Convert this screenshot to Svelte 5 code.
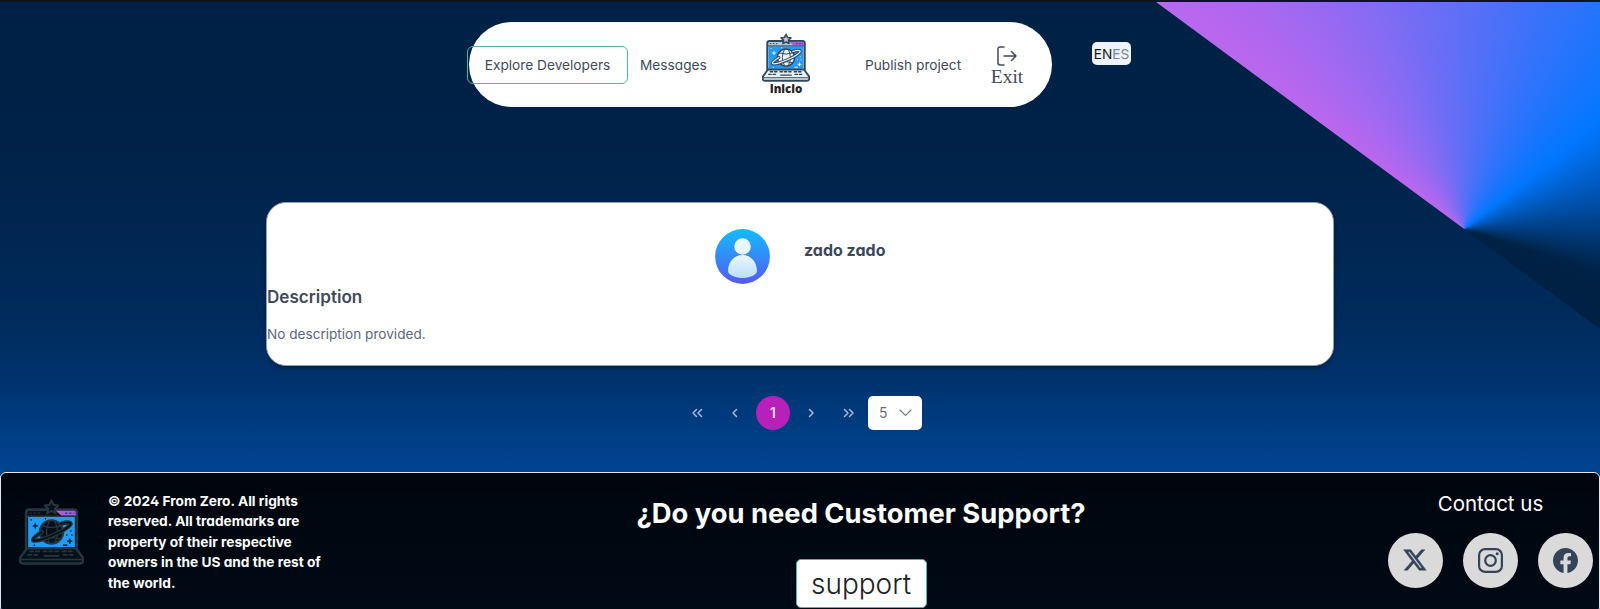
<script>
  const contacts = ['x', 'instagram', 'facebook'];
  const legal = [
    '© 2024 From Zero. All rights',
    'reserved. All trademarks are',
    'property of their respective',
    'owners in the US and the rest of',
    'the world.'
  ];
</script>

{#snippet logo(cls, line, key, bar)}
  <svg class={cls} viewBox="0 0 64 64" fill="none" stroke={line} stroke-linejoin="round" stroke-linecap="round">
    <path d="M7 49V13q0-3 3-3h44q3 0 3 3v36z" fill={bar} stroke-width="2.6" />
    <path d="M9 17h46v30H9z" fill="#219bf5" stroke="none" />
    <path d="M36 11h18q2 0 2 2v3H42z" fill="#a95de0" stroke="none" />
    <path d="M7.500 16.500h49M11 13.500h1M15 13.500h1M19 13.500h1M46 13.500h1M50 13.500h1M54 13.500h0" stroke-width="1.300" />
    <path d="M32 1l2 4.200 4.600.6-3.400 3.200.9 4.500-4.100-2.200-4.100 2.200.9-4.500-3.400-3.200 4.600-.6z" fill={bar} stroke-width="2" />
    <circle cx="32" cy="32" r="11.500" fill={key} stroke-width="2" />
    <path d="M23 26q9 3 18 0M23 39q9-3 18 0M30 21q-6 11 0 22M35 21q6 11 0 22" stroke-width="1.300" />
    <path d="M22.500 32C10 40 12 42 22 39.500 32 36.500 46 30 50 25.500c3-3.500-2-3.500-9-1.500" stroke-width="4.200" />
    <path d="M22.500 32C10 40 12 42 22 39.500 32 36.500 46 30 50 25.500c3-3.500-2-3.500-9-1.500" stroke={key} stroke-width="1.700" />
    <path d="M16 24v4M14 26h4M50 39v4M48 41h4M12 20h.2M26 19h.2M51 31h.2M47 35h.2M15 45h.2M44 45h3M52 35h.2" stroke={key} stroke-width="1.400" />
    <path d="M8 48h48l7 9.500v2.500q0 3-3 3H4q-3 0-3-3v-2.500z" fill={key} stroke-width="2.400" />
    <path d="M1.500 59h61" stroke-width="1.500" />
    <path d="M11 51h10M24 51h15M43 51h10M9 54.500h11M44 54.500h11" stroke-width="1.800" stroke-dasharray="3.200 2.600" />
    <path d="M25 55.500h14" stroke-width="1.800" />
  </svg>
{/snippet}

<div class="page">
  <div class="beam"></div>
  <header>
    <nav>
      <button class="explore">Explore Developers</button>
      <span class="messages">Messages</span>
      <span class="home">
        {@render logo('navlogo', '#30485a', '#e8f0f5', '#b9c9d3')}
        <b>Inicio</b>
      </span>
      <span class="publish">Publish project</span>
      <span class="exit">
        <svg width="20" height="20" viewBox="0 0 20 20" fill="none" stroke="#3f4a5a" stroke-width="1.500" stroke-linecap="round" stroke-linejoin="round">
          <path d="M7 1H3.200Q1 1 1 3.200v13.600Q1 19 3.200 19H7M7 10h12M14.500 5.500L19 10l-4.500 4.500" />
        </svg>
        <span>Exit</span>
      </span>
    </nav>
    <div class="lang"><span>EN</span><span class="off">ES</span></div>
  </header>

  <main>
    <article>
      <div class="person">
        <svg width="55" height="55" viewBox="0 0 55 55">
          <defs>
            <linearGradient id="disc" x1="0" y1="0" x2="0" y2="1"><stop stop-color="#12bdfb" /><stop offset="1" stop-color="#5558f5" /></linearGradient>
            <linearGradient id="body" x1="0" y1="0" x2="0" y2="1"><stop stop-color="#edf7ff" /><stop offset="1" stop-color="#b9dfff" /></linearGradient>
          </defs>
          <circle cx="27.500" cy="27.500" r="27.400" fill="url(#disc)" />
          <circle cx="27.500" cy="17.500" r="8.300" fill="#e8f6ff" />
          <path d="M27.500 26C19 26 13 33 13 42q0 2 1.800 3.200Q20 49 27.500 49t12.700-3.800Q42 44 42 42c0-9-6-16-14.500-16z" fill="url(#body)" />
        </svg>
        <h2>zado zado</h2>
      </div>
      <h3>Description</h3>
      <p>No description provided.</p>
    </article>

    <div class="pager">
      <svg class="step" viewBox="0 0 34 34"><path d="M16.500 13.500L13 17l3.500 3.500M21.500 13.500L18 17l3.500 3.500" /></svg>
      <svg class="step" viewBox="0 0 34 34"><path d="M18.500 13.500L15 17l3.500 3.500" /></svg>
      <span class="current">1</span>
      <svg class="step" viewBox="0 0 34 34"><path d="M15.500 13.500L19 17l-3.500 3.500" /></svg>
      <svg class="step" viewBox="0 0 34 34"><path d="M12.500 13.500L16 17l-3.500 3.500M17.500 13.500L21 17l-3.500 3.500" /></svg>
      <span class="rows">5
        <svg width="13" height="8" viewBox="0 0 13 8" fill="none" stroke="#74808f" stroke-width="1.200" stroke-linecap="round"><path d="M1 1l5.500 5.500L12 1" /></svg>
      </span>
    </div>
  </main>

  <footer>
    <div class="legal">
      {@render logo('footlogo', '#243640', '#071019', '#071019')}
      <p>{#each legal as line}<span>{line}</span>{/each}</p>
    </div>
    <div class="help">
      <h1>¿Do you need Customer Support?</h1>
      <button>support</button>
    </div>
    <div class="contact">
      <div class="label">Contact us</div>
      <div class="circles">
        {#each contacts as c}
          <span class="circle">
            {#if c === 'x'}
              <svg width="25" height="25" viewBox="0 0 24 24" fill="#35435a"><path d="M18.244 1.250h3.308l-7.227 8.260 8.502 11.240H16.170l-5.214-6.817L4.990 20.750H1.680l7.730-8.835L1.254 1.250H8.080l4.713 6.231zm-1.161 17.520h1.833L7.084 3.126H5.117z" transform="translate(-.6 .5)" stroke="#35435a" stroke-width=".5" /></svg>
            {:else if c === 'instagram'}
              <svg width="25" height="25" viewBox="0 0 25 25" fill="none" stroke="#35435a" stroke-width="2.200"><rect x="1.100" y="1.100" width="22.800" height="22.800" rx="6" /><circle cx="12.500" cy="12.500" r="5.300" /><circle cx="19.200" cy="5.800" r="1.500" fill="#35435a" stroke="none" /></svg>
            {:else}
              <svg width="25" height="25" viewBox="0 0 24 24" fill="#35435a"><path d="M24 12.073C24 5.405 18.627 0 12 0S0 5.405 0 12.073c0 6.026 4.388 11.020 10.125 11.927v-8.437H7.078v-3.490h3.047v-2.660c0-3.025 1.792-4.697 4.533-4.697 1.312 0 2.686.236 2.686.236v2.971h-1.513c-1.491 0-1.956.93-1.956 1.886v2.264h3.328l-.532 3.490h-2.796V24C19.612 23.093 24 18.099 24 12.073z" /></svg>
            {/if}
          </span>
        {/each}
      </div>
    </div>
  </footer>
</div>

<style>
  :global(body) { margin: 0; overflow: hidden; }
  .page {
    position: relative;
    box-sizing: border-box;
    height: 609px;
    display: flex;
    flex-direction: column;
    overflow: hidden;
    border-top: 2px solid #10131d;
    font-family: Inter, "Liberation Sans", sans-serif;
    font-feature-settings: "cv02", "cv03", "cv04", "cv11";
    color: #495057;
    background: linear-gradient(#002145 0, #002248 130px, #00254f 210px, #002b5b 310px, #00316a 370px, #003b7f 420px, #004492 470px);
  }
  .beam {
    position: absolute;
    inset: 0;
    background: conic-gradient(from 300deg at 1464px 227px, #b967ee 0deg, #b967ee 8deg, #0077ff 112deg, #002244 168deg, #002144 190deg, #b967ee 300deg);
    clip-path: polygon(1156px 0, 1600px 0, 1600px 327px);
  }
  header, main, footer { position: relative; flex: none; }
  button { font: inherit; font-feature-settings: inherit; color: inherit; box-sizing: border-box; padding: 0; }
  header { display: flex; height: 180px; padding: 20px 0 0 469px; box-sizing: border-box; }
  nav {
    display: flex;
    align-items: center;
    box-sizing: border-box;
    width: 583px;
    height: 85px;
    border-radius: 43px;
    background: #fff;
    color: #3f4b5b;
    font-size: 13.700px;
  }
  .explore { width: 161px; height: 38px; margin-left: -2px; border: 1px solid #4fb79a; border-radius: 6px; background: transparent; white-space: nowrap; }
  .messages { width: 67px; margin-left: 12px; }
  .home { display: flex; flex-direction: column; align-items: center; width: 50px; margin-left: 54px; }
  .home b { font: 800 11.500px/14px "Open Sans", sans-serif; color: #252525; margin-top: 0; }
  .navlogo { width: 48px; height: 49px; display: block; }
  .publish { width: 98px; margin-left: 54px; white-space: nowrap; }
  .exit { display: flex; flex-direction: column; align-items: center; width: 34px; margin: 3px 0 0 27px; font: 19.500px/20px "Liberation Serif", serif; }
  .exit svg { margin-bottom: 1px; }
  .lang { display: flex; align-items: center; justify-content: center; width: 39px; height: 23px; margin: 20px 0 0 40px; border-radius: 5px; background: #eef3fa; font-size: 13.700px; color: #15181c; }
  .off { color: #7b8794; }
  main { display: flow-root; height: 290px; }
  article {
    box-sizing: border-box;
    width: 1068px;
    height: 164px;
    margin: 20px auto 0;
    border: 1px solid #8fa0b5;
    border-radius: 20px;
    background: #fff;
    box-shadow: 0 2px 4px #0005;
  }
  .person { display: flex; gap: 34px; padding: 26px 0 0 448px; height: 55px; }
  h2 { margin: 10px 0 0; font-size: 16px; line-height: 22px; font-weight: 700; color: #3b475a; }
  h3 { margin: 1px 0 0; font-size: 17.100px; line-height: 24px; font-weight: 600; color: #3f4959; }
  article p { margin: 15px 0 0; font-size: 13.600px; line-height: 20px; color: #5d6677; }
  .pager { display: flex; align-items: center; margin: 29px 0 0 680px; height: 35px; }
  .step { width: 34px; height: 34px; margin-right: 4px; fill: none; stroke: #a5bbd6; stroke-width: 1.500; stroke-linecap: round; stroke-linejoin: round; }
  .current { display: grid; place-items: center; width: 34px; height: 34px; margin-right: 4px; border-radius: 50%; background: #b721b9; color: #fff; font-size: 14px; font-weight: 500; }
  .rows { display: flex; align-items: center; gap: 11px; box-sizing: border-box; width: 54px; height: 34px; margin-left: -2px; padding-left: 11px; border-radius: 5px; background: #fff; color: #6b7280; font-size: 14px; }
  footer {
    display: flex;
    box-sizing: border-box;
    height: 141px;
    border: 1px solid #dfe7ee;
    border-radius: 6px;
    background: linear-gradient(#00050d, #000a16);
    color: #fff;
  }
  .legal { display: flex; width: 636px; padding: 18px 0 0 18px; box-sizing: border-box; }
  .footlogo { width: 65px; height: 66px; margin-top: 8px; }
  .legal p { display: flex; flex-direction: column; margin: 0 0 0 24px; font-size: 13.700px; line-height: 20.400px; font-weight: 700; }
  .help { display: flex; flex-direction: column; align-items: center; width: 448px; }
  h1 { margin: 22px 0 0; font-size: 27.350px; line-height: 38px; font-weight: 700; white-space: nowrap; }
  .help button { width: 131px; height: 49px; flex: none; margin-top: 26px; border: 1px solid #4fb79a; border-radius: 5px; background: #fff; color: #202124; font-size: 28px; font-weight: 300; }
  .contact { margin-left: auto; width: 205px; margin-right: 6px; }
  .label { margin-top: 19px; text-align: center; font-size: 20.500px; line-height: 24px; }
  .circles { display: flex; justify-content: space-between; margin-top: 17px; }
  .circle { display: grid; place-items: center; width: 55px; height: 55px; border-radius: 50%; background: #dadada; }
</style>
